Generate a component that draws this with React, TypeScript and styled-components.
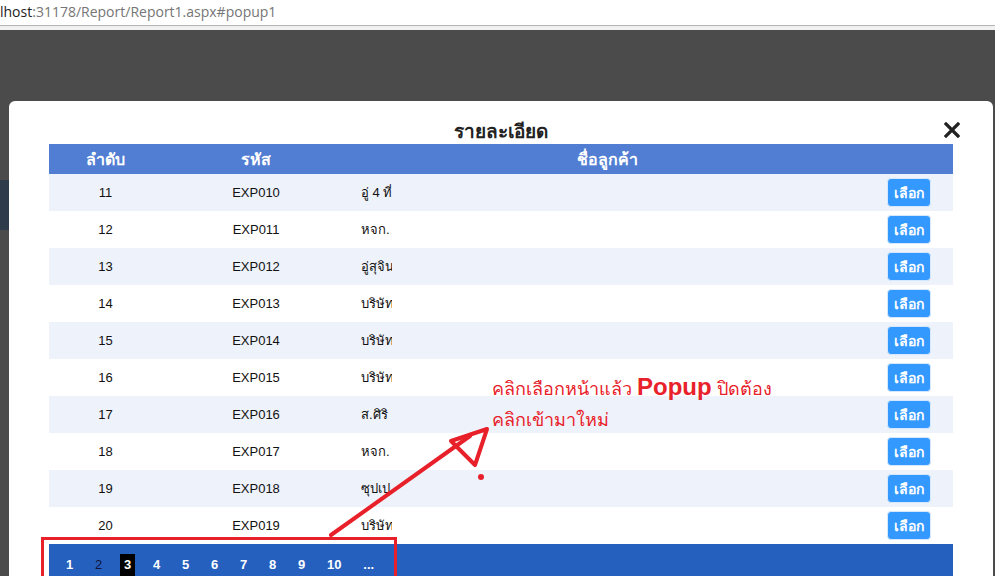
import styled, { createGlobalStyle } from "styled-components"

const GlobalStyle = createGlobalStyle`
	html, body {
		margin: 0;
		padding: 0;
		background: #4b4b4b;
		overflow: hidden;
	}
	body {
		font-family: "Liberation Sans", Tahoma, "Noto Sans", sans-serif;
		width: 995px;
		height: 576px;
	}
`

type Row = { no: number; code: string; name: string }

const rows: Row[] = [
	{ no: 11, code: "EXP010", name: "อู่ 4 ที่" },
	{ no: 12, code: "EXP011", name: "หจก." },
	{ no: 13, code: "EXP012", name: "อู่สุจิน" },
	{ no: 14, code: "EXP013", name: "บริษัท" },
	{ no: 15, code: "EXP014", name: "บริษัท" },
	{ no: 16, code: "EXP015", name: "บริษัท" },
	{ no: 17, code: "EXP016", name: "ส.ศิริ" },
	{ no: 18, code: "EXP017", name: "หจก." },
	{ no: 19, code: "EXP018", name: "ซุปเป" },
	{ no: 20, code: "EXP019", name: "บริษัท" },
]

const pages = ["1", "2", "3", "4", "5", "6", "7", "8", "9", "10", "..."]

const App = () => {
	return (
		<>
			<GlobalStyle />
			<Page>
				<AddressBar>
					<Host>lhost</Host>:31178/Report/Report1.aspx#popup1
				</AddressBar>
				<Stage>
					<Gutter>
						<GutterBlock />
					</Gutter>
					<Modal>
						<ModalTitle>รายละเอียด</ModalTitle>
						<CloseButton aria-label="close">
							<svg width="16" height="16" viewBox="0 0 16 16">
								<path d="M2 2 L14 14 M14 2 L2 14" stroke="#222" strokeWidth="3.2" strokeLinecap="square" />
							</svg>
						</CloseButton>
						<Table>
							<thead>
								<tr>
									<Th $w={113}>ลำดับ</Th>
									<Th $w={188}>รหัส</Th>
									<Th $w={514}>ชื่อลูกค้า</Th>
									<Th $w={89}></Th>
								</tr>
							</thead>
							<tbody>
								{rows.map((r, i) => (
									<Tr key={r.no} $alt={i % 2 === 0}>
										<Td>{r.no}</Td>
										<Td>{r.code}</Td>
										<NameTd>
											<NameClip>{r.name}</NameClip>
										</NameTd>
										<Td>
											<PickButton>เลือก</PickButton>
										</Td>
									</Tr>
								))}
								<PagerRow>
									<td colSpan={4}>
										<Pager>
											{pages.map((p) => (
												<PageItem key={p}>
													<PageLink $current={p === "3"} $visited={p === "2"}>{p}</PageLink>
												</PageItem>
											))}
										</Pager>
									</td>
								</PagerRow>
							</tbody>
						</Table>
					</Modal>
					<RightGutter />
				</Stage>

				<Note>
					<NoteLine>
						คลิกเลือกหน้าแล้ว <NoteStrong>Popup</NoteStrong> ปิดต้อง
					</NoteLine>
					<NoteLine>คลิกเข้ามาใหม่</NoteLine>
				</Note>
				<Marks width="995" height="576" viewBox="0 0 995 576">
					<rect x="42.5" y="538.5" width="353" height="40" fill="none" stroke="#e8202a" strokeWidth="3" />
					<path d="M331 535 L470 436" stroke="#e8202a" strokeWidth="4" strokeLinecap="round" />
					<path d="M451 441 L487 429 L475 465 Z" fill="none" stroke="#e8202a" strokeWidth="4" strokeLinejoin="round" />
					<circle cx="481" cy="477" r="3" fill="#e8202a" />
				</Marks>
			</Page>
		</>
	)
}

export default App

const Page = styled.div`
	position: relative;
	width: 995px;
	height: 576px;
	overflow: hidden;
	display: flex;
	flex-direction: column;
`

const AddressBar = styled.div`
	height: 25px;
	line-height: 24px;
	background: #fff;
	border-bottom: 1px solid #b4b4b4;
	box-shadow: 0 4px 0 #f1f1f1;
	font-family: "Open Sans", "Liberation Sans", sans-serif;
	font-size: 14px;
	color: #757575;
	white-space: nowrap;
	margin-bottom: 4px;
`

const Host = styled.span`
	color: #222;
`

const Stage = styled.div`
	flex: 1;
	display: flex;
	background: #4b4b4b;
	padding-top: 71px;
	min-height: 0;
`

const Gutter = styled.div`
	width: 9px;
	flex: none;
`

const GutterBlock = styled.div`
	margin-top: 79px;
	height: 50px;
	background: #2d3b4b;
`

const RightGutter = styled.div`
	width: 2px;
	flex: none;
`

const Modal = styled.div`
	position: relative;
	flex: 1;
	background: #fff;
	border-radius: 6px 6px 0 0;
	padding: 19px 40px 0;
	display: flex;
	flex-direction: column;
	align-items: center;
`

const ModalTitle = styled.div`
	font-size: 19px;
	font-weight: bold;
	color: #222;
	line-height: 24px;
	text-align: center;
`

const CloseButton = styled.div`
	position: absolute;
	top: 21px;
	right: 33px;
	width: 16px;
	height: 16px;
	cursor: pointer;
`

const Table = styled.table`
	width: 904px;
	border-collapse: collapse;
	table-layout: fixed;
	font-size: 13px;
	color: #111;
`

const Th = styled.th<{ $w: number }>`
	width: ${(p) => p.$w}px;
	height: 30px;
	padding: 0;
	background: #517dd2;
	color: #fff;
	font-size: 16px;
	font-weight: bold;
	text-align: center;
`

const Tr = styled.tr<{ $alt: boolean }>`
	height: 37px;
	background: ${(p) => (p.$alt ? "#eef2fa" : "#fff")};
`

const Td = styled.td`
	padding: 0;
	text-align: center;
	vertical-align: middle;
`

const NameTd = styled.td`
	padding: 0 0 0 11px;
	text-align: left;
	vertical-align: middle;
`

const NameClip = styled.span`
	display: inline-block;
	width: 31px;
	overflow: hidden;
	white-space: nowrap;
	vertical-align: middle;
`

const PickButton = styled.button`
	width: 44px;
	height: 29px;
	padding: 0;
	border: 1px solid #d6e8ff;
	border-radius: 4px;
	background: #3399ff;
	color: #fff;
	font-family: inherit;
	font-size: 14px;
	font-weight: bold;
	vertical-align: middle;
	margin-left: 1px;
`

const PagerRow = styled.tr`
	background: #2560be;
	height: 40px;
`

const Pager = styled.div`
	display: flex;
	align-items: center;
	padding: 1px 0 0 5px;
	height: 32px;
	box-sizing: border-box;
`

const PageItem = styled.div`
	padding: 0 10.9px;
	display: flex;
	justify-content: center;
`

const PageLink = styled.span<{ $current: boolean; $visited: boolean }>`
	display: inline-block;
	font-size: 13px;
	font-weight: ${(p) => (p.$visited ? "normal" : "bold")};
	line-height: 22px;
	color: ${(p) => (p.$visited ? "#14143a" : "#fff")};
	background: ${(p) => (p.$current ? "#000" : "transparent")};
	padding: 0 ${(p) => (p.$current ? "4px" : "0")};
	margin: 0 ${(p) => (p.$current ? "-4px" : "0")};
`

const Note = styled.div`
	position: absolute;
	left: 492px;
	top: 371px;
	color: #e8212a;
	font-size: 18px;
	line-height: 31px;
`

const NoteLine = styled.div`
	white-space: nowrap;
`

const NoteStrong = styled.span`
	font-size: 24px;
	font-weight: bold;
	font-family: "Liberation Sans", sans-serif;
`

const Marks = styled.svg`
	position: absolute;
	left: 0;
	top: 0;
	pointer-events: none;
`
